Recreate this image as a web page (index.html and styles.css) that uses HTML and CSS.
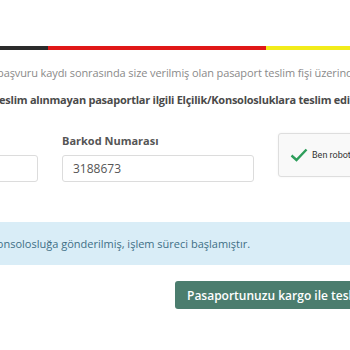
FILE: index.html
```html
<!DOCTYPE html>
<html lang="tr">
<head>
<meta charset="utf-8">
<link rel="stylesheet" href="styles.css">
</head>
<body>
<div class="page">
  <div class="flag"><span class="f-black"></span><span class="f-red"></span><span class="f-yellow"></span></div>
  <p class="info">başvuru kaydı sonrasında size verilmiş olan pasaport teslim fişi üzerinde yer alan</p>
  <p class="note">Teslim alınmayan pasaportlar ilgili Elçilik/Konsolosluklara teslim edilmektedir.</p>
  <div class="form-row">
    <div class="field">
      <label class="label">Başvuru Numarası</label>
      <div class="input"></div>
    </div>
    <div class="field">
      <label class="label">Barkod Numarası</label>
      <div class="input">3188673</div>
    </div>
    <div class="captcha">
      <svg class="check" width="18" height="14" viewBox="0 0 18 14"><path d="M1.5 7.5 L6.5 12 L16.5 1.5" fill="none" stroke="#2e9e5b" stroke-width="2.4"/></svg>
      <span class="captcha-text">Ben robot değilim</span>
    </div>
  </div>
  <div class="alert">Pasaportunuz Konsolosluğa gönderilmiş, işlem süreci başlamıştır.</div>
  <div class="actions"><button class="btn">Pasaportunuzu kargo ile teslim almak için tıklayınız</button></div>
</div>
</body>
</html>
```
FILE: styles.css
```css
html, body {
  margin: 0;
  padding: 0;
  background: #fff;
  overflow: hidden;
}
body {
  width: 350px;
  height: 350px;
  font-family: "Open Sans", "Noto Sans", sans-serif;
}
.page {
  padding-top: 46px;
  white-space: nowrap;
}
.flag {
  display: flex;
  height: 4px;
}
.f-black { width: 48px; background: #2b2b2b; }
.f-red { width: 218px; background: #e01818; }
.f-yellow { flex: 1; background: #f2ec1a; }
.info {
  margin: 14px 0 0 -3px;
  font-size: 11px;
  line-height: 18px;
  color: #8a8a8a;
  letter-spacing: -0.1px;
}
.note {
  margin: 9px 0 0 -7px;
  font-size: 11px;
  line-height: 18px;
  font-weight: 700;
  color: #4a4a4a;
  letter-spacing: -0.25px;
}
.form-row {
  display: flex;
  gap: 24px;
  margin: 24px 0 0 -154px;
  align-items: flex-start;
}
.field {
  flex: none;
  width: 192px;
  display: flex;
  flex-direction: column;
  gap: 6px;
}
.label {
  font-size: 11px;
  line-height: 16px;
  font-weight: 700;
  color: #555;
}
.input {
  box-sizing: border-box;
  height: 27px;
  border: 1px solid #dcdcdc;
  border-radius: 3px;
  padding: 0 10px;
  font-size: 12px;
  line-height: 25px;
  color: #555;
}
.captcha {
  flex: none;
  box-sizing: border-box;
  width: 174px;
  height: 44px;
  border: 1px solid #dedede;
  border-radius: 3px;
  background: #f9f9f9;
  display: flex;
  align-items: center;
  gap: 4px;
  padding-left: 11px;
  box-shadow: 0 0 3px rgba(0,0,0,0.05);
}
.check { flex: none; }
.captcha-text {
  font-family: Roboto, sans-serif;
  font-size: 9px;
  color: #333;
}
.alert {
  margin-top: 40px;
  height: 43px;
  background: #d9edf7;
  color: #3e6f86;
  font-size: 11px;
  line-height: 43px;
  text-indent: -84px;
}
.actions {
  margin-top: 16px;
  padding-left: 175px;
}
.btn {
  height: 28px;
  border: 0;
  border-radius: 3px;
  background: #4b7d6e;
  color: #fff;
  font-family: inherit;
  font-size: 12px;
  font-weight: 600;
  padding: 0 12px;
  white-space: nowrap;
}
```
